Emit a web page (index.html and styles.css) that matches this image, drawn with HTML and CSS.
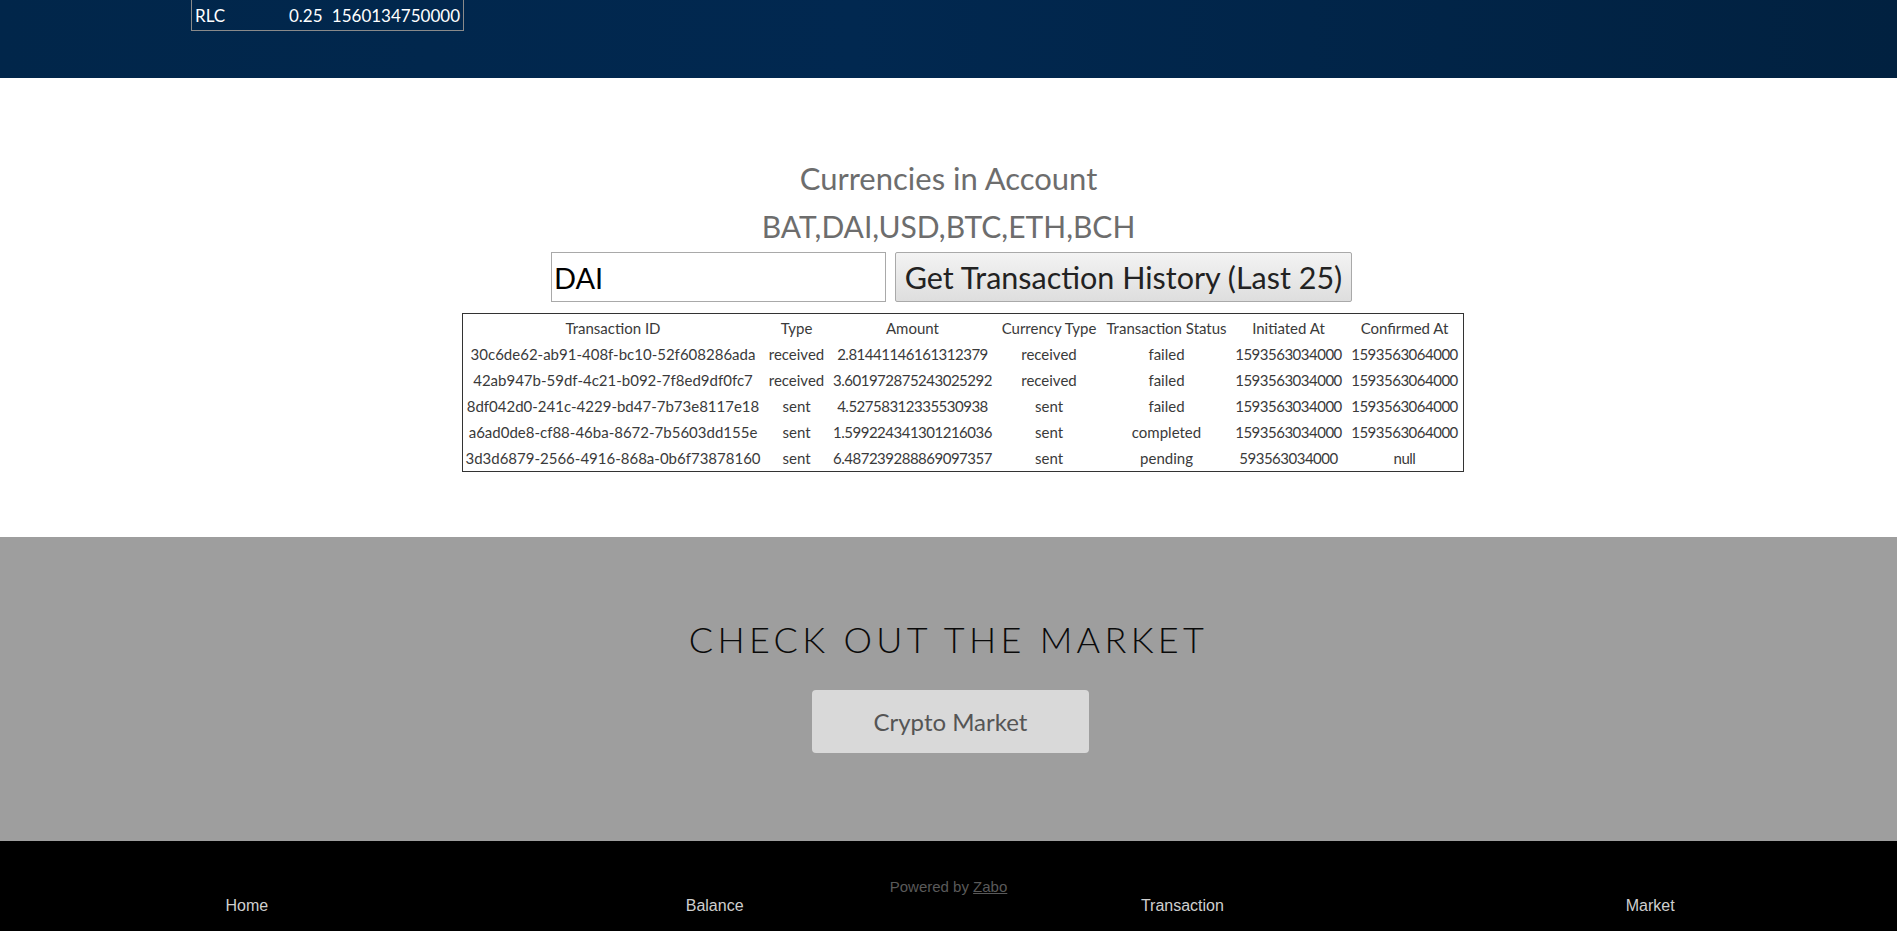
FILE: index.html
```html
<!DOCTYPE html>
<html lang="en">
<head>
<meta charset="utf-8">
<title>Transactions</title>
<link rel="stylesheet" href="styles.css">
</head>
<body>
<header class="top">
  <table class="mini">
    <tr><td class="mini-sym">RLC</td><td class="mini-amt">0.25</td><td class="mini-ts">1560134750000</td></tr>
  </table>
</header>

<section class="account">
  <h2 class="acc-title">Currencies in Account</h2>
  <p class="acc-list">BAT,DAI,USD,BTC,ETH,BCH</p>
  <form class="acc-form">
    <input class="acc-input" type="text" value="DAI">
    <button class="acc-btn" type="button">Get Transaction History (Last 25)</button>
  </form>
  <table class="tx">
    <colgroup>
      <col class="c-id"><col class="c-type"><col class="c-amt"><col class="c-cur"><col class="c-status"><col class="c-init"><col class="c-conf">
    </colgroup>
    <thead>
      <tr><th>Transaction ID</th><th>Type</th><th>Amount</th><th>Currency Type</th><th>Transaction Status</th><th>Initiated At</th><th>Confirmed At</th></tr>
    </thead>
    <tbody>
      <tr><td>30c6de62-ab91-408f-bc10-52f608286ada</td><td>received</td><td>2.81441146161312379</td><td>received</td><td>failed</td><td>1593563034000</td><td>1593563064000</td></tr>
      <tr><td>42ab947b-59df-4c21-b092-7f8ed9df0fc7</td><td>received</td><td>3.601972875243025292</td><td>received</td><td>failed</td><td>1593563034000</td><td>1593563064000</td></tr>
      <tr><td>8df042d0-241c-4229-bd47-7b73e8117e18</td><td>sent</td><td>4.52758312335530938</td><td>sent</td><td>failed</td><td>1593563034000</td><td>1593563064000</td></tr>
      <tr><td>a6ad0de8-cf88-46ba-8672-7b5603dd155e</td><td>sent</td><td>1.599224341301216036</td><td>sent</td><td>completed</td><td>1593563034000</td><td>1593563064000</td></tr>
      <tr><td>3d3d6879-2566-4916-868a-0b6f73878160</td><td>sent</td><td>6.487239288869097357</td><td>sent</td><td>pending</td><td>593563034000</td><td>null</td></tr>
    </tbody>
  </table>
</section>

<section class="market">
  <h2 class="market-title">CHECK OUT THE MARKET</h2>
  <a class="market-btn" href="#">Crypto Market</a>
</section>

<footer class="foot">
  <p class="powered">Powered by <a href="#" class="zabo">Zabo</a></p>
  <nav class="foot-nav">
    <a href="#">Home</a>
    <a href="#">Balance</a>
    <a href="#">Transaction</a>
    <a href="#">Market</a>
  </nav>
</footer>
</body>
</html>
```

FILE: styles.css
```css
* { box-sizing: border-box; }

body {
  margin: 0;
  font-family: Lato, "Open Sans", sans-serif;
  background: #fff;
}

/* header band */
.top {
  height: 78px;
  background: linear-gradient(90deg, #01264a 0%, #012850 45%, #012140 100%);
  padding-left: 191px;
}

.mini {
  border-collapse: collapse;
  border: 1px solid #8a8a8a;
  border-top: none;
  width: 273px;
  color: #fff;
  font-size: 17px;
}

.mini td {
  padding: 2px 3px 4px;
  height: 30px;
  vertical-align: bottom;
}

.mini-sym { text-align: left; width: 60px; }
.mini-amt { text-align: right; }
.mini-ts { text-align: right; width: 138px; }

/* account section */
.account {
  height: 459px;
  padding-top: 82px;
  text-align: center;
}

.acc-title {
  margin: 0;
  font-size: 31px;
  line-height: 36px;
  font-weight: 400;
  color: #6d6d6d;
}

.acc-list {
  margin: 12px 0 0;
  font-size: 30px;
  line-height: 36px;
  color: #6d6d6d;
}

.acc-form {
  margin-top: 8px;
  display: flex;
  justify-content: center;
  gap: 9px;
  padding-left: 6px;
}

.acc-input {
  width: 335px;
  height: 50px;
  border: 1px solid #a9a9a9;
  padding: 0 2px;
  font-family: Lato, sans-serif;
  font-size: 29px;
  color: #000;
  margin: 0;
}

.acc-btn {
  width: 457px;
  height: 50px;
  border: 1px solid #a9a9a9;
  border-radius: 2px;
  background: linear-gradient(#f3f3f3, #dedede);
  font-family: Lato, sans-serif;
  font-size: 30.5px;
  font-weight: 400;
  color: #222;
  padding: 0;
  margin: 0;
}

.tx {
  margin: 11px 0 0 calc(50% - 487px);
  border: 1px solid #333;
  border-collapse: separate;
  border-spacing: 0;
  table-layout: fixed;
  width: 1002px;
  font-size: 15px;
  color: #3a3a3a;
}

.c-id { width: 301px; }
.c-type { width: 66px; }
.c-amt { width: 166px; }
.c-cur { width: 107px; }
.c-status { width: 128px; }
.c-init { width: 116px; }
.c-conf { width: 116px; }

.tx th,
.tx td {
  font-weight: 400;
  text-align: center;
  padding: 0;
  height: 26px;
  white-space: nowrap;
}

.tx th { height: 27px; }

.tx td:nth-child(3),
.tx td:nth-child(6),
.tx td:nth-child(7) {
  letter-spacing: -0.5px;
}

/* market */
.market {
  height: 304px;
  background: #9e9e9e;
  padding-top: 80px;
  text-align: center;
}

.market-title {
  margin: 0;
  font-size: 36px;
  line-height: 44px;
  font-weight: 300;
  letter-spacing: 4.3px;
  color: #0a0a0a;
}

.market-btn {
  display: inline-flex;
  align-items: center;
  justify-content: center;
  margin: 29px 0 0 4px;
  width: 277px;
  height: 63px;
  background: #d9d9d9;
  border-radius: 4px;
  color: #555;
  font-size: 24px;
  text-decoration: none;
}

/* footer */
.foot {
  height: 90px;
  background: #000;
  padding: 37px 13px 0;
  font-family: "Liberation Sans", Arial, sans-serif;
}

.powered {
  margin: 0;
  text-align: center;
  font-size: 15px;
  line-height: 18px;
  color: #5a5a5a;
}

.zabo { color: #5a5a5a; }

.foot-nav {
  display: grid;
  grid-template-columns: repeat(4, 1fr);
  text-align: center;
  font-size: 16px;
  line-height: 20px;
}

.foot-nav a {
  color: #cfcfcf;
  text-decoration: none;
}
```
